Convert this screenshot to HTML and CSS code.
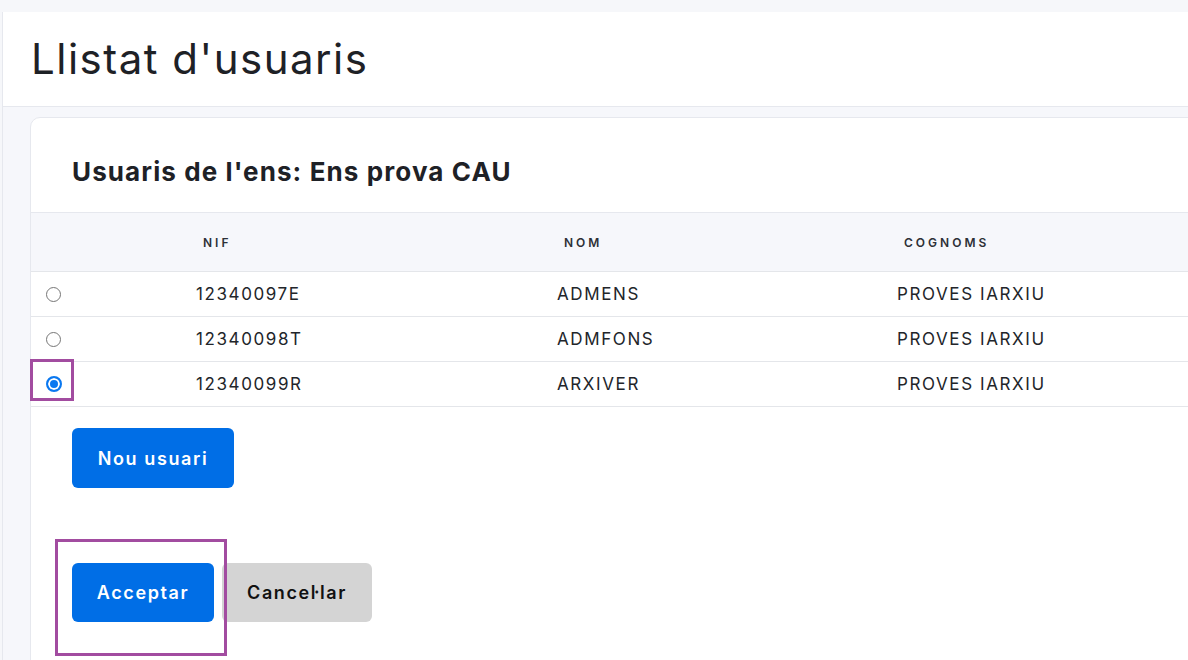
FILE: index.html
```html
<!DOCTYPE html>
<html lang="ca">
<head>
<meta charset="utf-8">
<title>Llistat d'usuaris</title>
<link rel="stylesheet" href="styles.css">
</head>
<body>
<div class="layout">
  <header class="page-header">
    <h1 class="page-title">Llistat d'usuaris</h1>
  </header>
  <main class="content">
    <section class="card">
      <h2 class="card-title">Usuaris de l'ens: Ens prova CAU</h2>
      <div class="table">
        <div class="row head">
          <div class="cell sel"></div>
          <div class="cell c-nif">NIF</div>
          <div class="cell c-nom">NOM</div>
          <div class="cell c-cog">COGNOMS</div>
        </div>
        <div class="row">
          <div class="cell sel"><span class="radio"></span></div>
          <div class="cell c-nif">12340097E</div>
          <div class="cell c-nom">ADMENS</div>
          <div class="cell c-cog">PROVES IARXIU</div>
        </div>
        <div class="row">
          <div class="cell sel"><span class="radio"></span></div>
          <div class="cell c-nif">12340098T</div>
          <div class="cell c-nom">ADMFONS</div>
          <div class="cell c-cog">PROVES IARXIU</div>
        </div>
        <div class="row">
          <div class="cell sel"><span class="radio checked"></span></div>
          <div class="cell c-nif">12340099R</div>
          <div class="cell c-nom">ARXIVER</div>
          <div class="cell c-cog">PROVES IARXIU</div>
        </div>
      </div>
      <div class="actions-new">
        <button class="btn btn-primary btn-new">Nou usuari</button>
      </div>
      <div class="actions">
        <button class="btn btn-primary btn-ok">Acceptar</button>
        <button class="btn btn-secondary">Cancel·lar</button>
      </div>
    </section>
  </main>
</div>
<div class="mark mark-radio"></div>
<div class="mark mark-ok"></div>
</body>
</html>
```
FILE: styles.css
```css
html, body {
  margin: 0;
  padding: 0;
  height: 100%;
  overflow: hidden;
}
body {
  background: #f6f7fa;
  font-family: Inter, "Liberation Sans", sans-serif;
  color: #212529;
  position: relative;
}
.layout {
  margin-top: 12px;
  margin-left: 2px;
  border-left: 1px solid #e6e8ee;
  min-height: 700px;
  background: #f6f7fb;
}
.page-header {
  background: #fff;
  height: 94px;
  border-bottom: 1px solid #e6e8ee;
  display: flex;
  align-items: center;
  padding-left: 28px;
}
.page-title {
  margin: 0;
  font-size: 42px;
  font-weight: 400;
  color: #1e2126;
  letter-spacing: 1.5px;
  padding-bottom: 2px;
}
.content {
  padding-top: 10px;
  padding-left: 27px;
}
.card {
  background: #fff;
  border: 1px solid #e6e8ee;
  border-radius: 10px 0 0 0;
  width: 1300px;
  min-height: 600px;
}
.card-title {
  margin: 0;
  height: 94px;
  display: flex;
  align-items: center;
  padding-left: 41px;
  padding-top: 12px;
  font-size: 26px;
  font-weight: 700;
  color: #1e2126;
  letter-spacing: 1.1px;
  box-sizing: border-box;
}
.table {
  border-top: 1px solid #e6e8ee;
}
.row {
  display: flex;
  align-items: center;
  height: 44px;
  border-bottom: 1px solid #e4e6ea;
  font-size: 17px;
  color: #22252a;
  letter-spacing: 1.6px;
}
.row.head {
  height: 58px;
  background: #f6f7fb;
  font-size: 12px;
  font-weight: 600;
  letter-spacing: 3px;
  color: #2d3036;
}
.cell.sel {
  width: 141px;
  padding-left: 15px;
  box-sizing: border-box;
  display: flex;
  align-items: center;
}
.c-nif { width: 361px; padding-left: 24px; box-sizing: border-box; }
.c-nom { width: 340px; padding-left: 24px; box-sizing: border-box; }
.c-cog { padding-left: 24px; }
.head .c-nif, .head .c-nom, .head .c-cog { padding-left: 31px; }
.radio {
  width: 15px;
  height: 15px;
  border: 1.5px solid #767676;
  border-radius: 50%;
  box-sizing: border-box;
  display: inline-block;
}
.radio.checked {
  border: 2px solid #0a78f0;
  background: #0a78f0;
  box-shadow: inset 0 0 0 2px #fff;
  width: 16px;
  height: 16px;
}
.actions-new {
  padding: 21px 0 0 41px;
}
.actions {
  padding: 75px 0 0 41px;
  display: flex;
  gap: 8px;
}
.btn {
  font-family: inherit;
  font-size: 18px;
  font-weight: 600;
  letter-spacing: 1.6px;
  border: none;
  border-radius: 6px;
  height: 60px;
  cursor: pointer;
}
.btn-primary {
  background: #006ee6;
  color: #fff;
}
.btn-new { width: 162px; }
.btn-ok { width: 142px; height: 59px; }
.btn-secondary {
  background: #d4d4d4;
  color: #111;
  width: 150px;
  height: 59px;
}
.mark {
  position: absolute;
  border: 3px solid #a24ca0;
  box-sizing: border-box;
}
.mark-radio {
  left: 30px;
  top: 359px;
  width: 44px;
  height: 42px;
}
.mark-ok {
  left: 55px;
  top: 539px;
  width: 172px;
  height: 117px;
}
```
